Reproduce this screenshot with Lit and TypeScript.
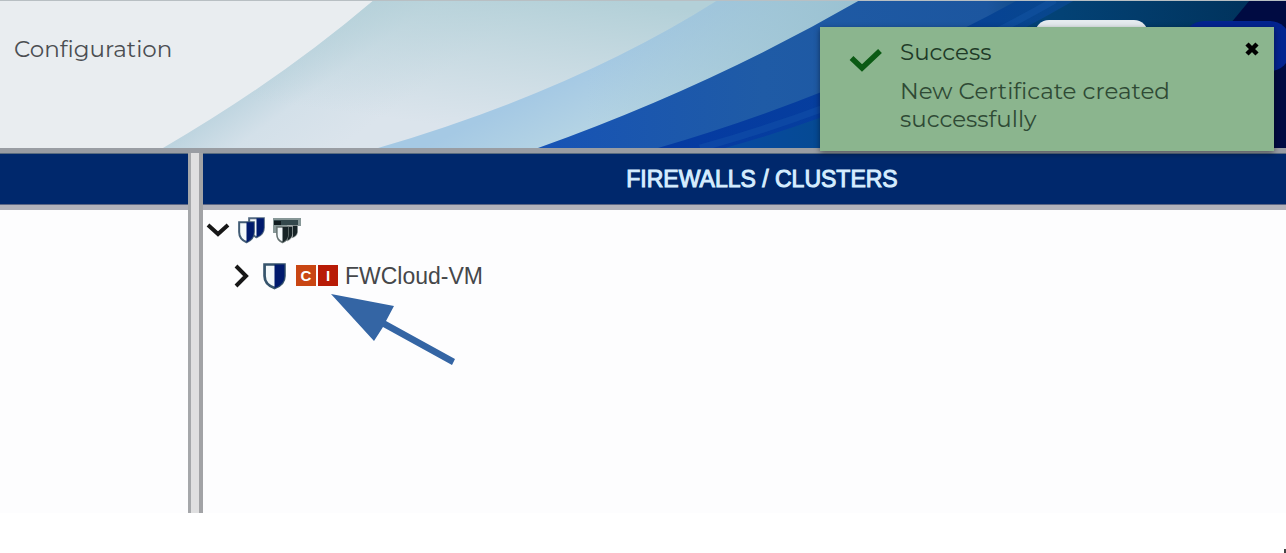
import { LitElement, html, css, svg } from "lit";
import { customElement, state } from "lit/decorators.js";

const shieldShape = (x: number, y: number, w: number, h: number, ink: string, rim: string) => svg`
  <g transform="translate(${x} ${y}) scale(${w / 22} ${h / 26})">
    <path d="M1.5 1.5H20.5V13C20.5 19 16.5 23 11 25C5.5 23 1.5 19 1.5 13Z" fill="#f4f9fb" stroke=${rim} stroke-width="2.6"/>
    <path d="M11 1.5H20.5V13C20.5 19 16.5 23 11 25Z" fill=${ink}/>
  </g>`;

@customElement("app-banner")
export class AppBanner extends LitElement {
  static styles = css`
    :host { display: block; position: relative; height: 148px; overflow: hidden; border-bottom: 5px solid #999da3; background: #e9edf0; }
    .art { position: absolute; inset: 0; width: 100%; height: 100%; }
    nav { position: relative; padding: 35px 14px; }
    a { color: #4b4e52; font: 23px/28px Montserrat, Inter, sans-serif; text-decoration: none; }
  `;
  render() {
    return html`
      <svg class="art" viewBox="0 0 1286 148" preserveAspectRatio="none" aria-hidden="true">
        <defs>
          <linearGradient id="pale" gradientUnits="userSpaceOnUse" x1="270" y1="72" x2="330" y2="155">
            <stop offset="0" stop-color="#bdd4df"/><stop offset=".4" stop-color="#d3e0e9"/><stop offset="1" stop-color="#dbe4ec"/>
          </linearGradient>
          <linearGradient id="paleTop" x1="0" y1="1" x2="1" y2="0">
            <stop offset=".2" stop-color="#b9d3da" stop-opacity="0"/><stop offset=".7" stop-color="#b3d0d8"/>
          </linearGradient>
          <linearGradient id="sky" gradientUnits="userSpaceOnUse" x1="560" y1="82" x2="590" y2="145">
            <stop offset="0" stop-color="#a5c9e4"/><stop offset="1" stop-color="#b8d6e4"/>
          </linearGradient>
          <linearGradient id="skyTop" x1="0" y1="0" x2="1" y2="0">
            <stop offset=".4" stop-color="#9bc2d2" stop-opacity="0"/><stop offset=".9" stop-color="#9bc2d2"/>
          </linearGradient>
          <linearGradient id="royal" x1="0" y1="0" x2="1" y2="0">
            <stop offset="0" stop-color="#1753b5"/><stop offset=".3" stop-color="#1f5ba6"/><stop offset=".6" stop-color="#1c569f"/>
            <stop offset=".7" stop-color="#06406f"/><stop offset="1" stop-color="#012a66"/>
          </linearGradient>
          <linearGradient id="stripe" x1="0" y1="0" x2="1" y2="0">
            <stop offset="0" stop-color="#053aa2"/><stop offset=".4" stop-color="#06409c"/><stop offset=".65" stop-color="#08478c"/><stop offset="1" stop-color="#003a6e"/>
          </linearGradient>
          <linearGradient id="deep" x1="0" y1="0" x2="1" y2="0">
            <stop offset="0" stop-color="#074aa2"/><stop offset=".3" stop-color="#044a88"/><stop offset=".6" stop-color="#034275"/><stop offset="1" stop-color="#003058"/>
          </linearGradient>
        </defs>
        <path d="M163 148Q280 80 374 0H1286V148Z" fill="url(#pale)"/>
        <path d="M163 148Q280 80 374 0H1286V148Z" fill="url(#paleTop)"/>
        <path d="M378 148Q576 90 718 0H1286V148Z" fill="url(#sky)"/>
        <path d="M378 148Q576 90 718 0H900V148Z" fill="url(#skyTop)"/>
        <path d="M538 148Q711 86 860 0H1286V148Z" fill="url(#royal)"/>
        <path d="M658 148Q850 92 1018 0H1286V148Z" fill="url(#stripe)"/>
        <path d="M700 148Q882 98 1055 0" fill="none" stroke="#1a5bae" stroke-width="7" opacity=".35"/>
        <path d="M725 148Q905 98 1075 0H1286V148Z" fill="url(#deep)"/>
        <path d="M1130 148Q1200 60 1250 0H1286V148Z" fill="#000b42"/>
        <rect x="1035" y="20" width="113" height="42" rx="14" fill="#e5ebef"/>
        <rect x="1184" y="21" width="106" height="50" rx="20" fill="#032490"/>
        <path d="M0 0H1286V1H0Z" fill="#b8bfc3"/>
      </svg>
      <nav><a href="#configuration">Configuration</a></nav>
    `;
  }
}

@customElement("app-toast")
export class AppToast extends LitElement {
  static styles = css`
    :host { display: flex; box-sizing: border-box; width: 454px; min-height: 124px; padding: 11px 14px 14px 28px; gap: 16px; background: #8bb58e; color: #2f4a35; box-shadow: 0 2px 6px #0007; font: 23px/28px Montserrat, Inter, sans-serif; }
    .tick { width: 36px; height: 32px; flex: none; margin-top: 6px; }
    .copy { flex: 1; }
    .title, .detail { margin: 0; }
    .title { color: #203a27; }
    .detail { margin-top: 11px; max-width: 290px; }
    button { flex: none; align-self: flex-start; margin-top: 2px; padding: 0; border: 0; background: none; width: 16px; height: 18px; cursor: pointer; }
    button svg { display: block; width: 16px; height: 18px; }
  `;
  render() {
    return html`
      <svg class="tick" viewBox="0 0 36 32" aria-hidden="true"><path d="M3.500 14L14 24L32 7" fill="none" stroke="#0b5a14" stroke-width="5.500"/></svg>
      <div class="copy">
        <p class="title">Success</p>
        <p class="detail">New Certificate created successfully</p>
      </div>
      <button type="button" aria-label="Close" @click=${() => this.dispatchEvent(new Event("dismiss"))}>
        <svg viewBox="0 0 16 18"><path d="M3 4L13 14M13 4L3 14" stroke="#000" stroke-width="4.500"/></svg>
      </button>
    `;
  }
}

@customElement("firewall-tree")
export class FirewallTree extends LitElement {
  static styles = css`
    :host { display: block; padding: 0 1px; color: #45474a; font: 23px/28px "Liberation Sans", Arial, sans-serif; }
    ul { list-style: none; margin: 0; padding: 0; }
    .row { display: flex; align-items: center; height: 51px; }
    .root { height: 40px; }
    .child { padding-left: 22px; }
    button { padding: 0; border: 0; background: none; width: 28px; height: 28px; cursor: pointer; }
    svg { display: block; flex: none; }
    .pair { margin-left: 5px; }
    .stack { margin-left: 5px; }
    .shield { margin-left: 9px; }
    .badges { display: flex; gap: 2px; margin: 0 7px 0 10px; }
    .badge { width: 20px; height: 21px; background: #c94613; color: #fff; font: bold 15px/21px "Liberation Sans", Arial, sans-serif; text-align: center; }
    .install { background: #b81b06; }
  `;
  render() {
    return html`
      <ul>
        <li>
          <div class="row root">
            <button type="button" aria-label="Collapse"><svg width="28" height="28" viewBox="0 0 28 28"><path d="M4 9L14 18L24 9" fill="none" stroke="#171717" stroke-width="4"/></svg></button>
            <svg class="pair" width="30" height="28" viewBox="0 0 30 28">
              ${shieldShape(11, 1, 17, 21, "#001a6d", "#536981")}
              ${shieldShape(1, 5, 17, 22, "#001a6d", "#425c75")}
            </svg>
            <svg class="stack" width="30" height="28" viewBox="0 0 30 28">
              <path d="M1 2H29V10H26V17H1Z" fill="#879797"/>
              <path d="M2 4H26V9H2Z" fill="#34484c"/><path d="M2 5H9V9H2Z" fill="#111c20"/>
              ${shieldShape(15, 9, 11, 13, "#172326", "#a4abab")}
              ${shieldShape(10, 10, 11, 15, "#172326", "#a4abab")}
              ${shieldShape(4, 10, 13, 17, "#172326", "#667271")}
            </svg>
          </div>
          <ul>
            <li class="row child">
              <button type="button" aria-label="Expand"><svg width="28" height="28" viewBox="0 0 28 28"><path d="M10 4L20 14L10 24" fill="none" stroke="#171717" stroke-width="4"/></svg></button>
              <svg class="shield" width="23" height="28" viewBox="0 0 23 28">${shieldShape(0, 1, 23, 26, "#001a6d", "#36546c")}</svg>
              <span class="badges"><span class="badge">C</span><span class="badge install">I</span></span>
              <span>FWCloud-VM</span>
            </li>
          </ul>
        </li>
      </ul>
    `;
  }
}

@customElement("app-root")
export class AppRoot extends LitElement {
  static styles = css`
    :host { display: flex; flex-direction: column; position: relative; min-height: 100vh; box-sizing: border-box; padding-bottom: 40px; overflow: hidden; background: #fff; }
    app-banner { flex: none; }
    .workspace { flex: 1; display: grid; grid-template-columns: 188px 15px minmax(0, 1fr); }
    .panel { background: #fdfdfe; }
    .head { box-sizing: border-box; height: 57px; margin: 0; padding: 3px 0 0 35px; border-top: 1px solid #596c80; border-bottom: 5px solid #b2b2ba; background: #00286c; box-shadow: inset 0 -1px #5b6685; color: #d5edff; font: 23px/45px "Liberation Sans", Arial, sans-serif; -webkit-text-stroke: 1px #d5edff; text-align: center; }
    .splitter { box-sizing: border-box; border-left: 3px solid #a5a7aa; border-right: 4px solid #a2a3a6; background: #dfdfe0; }
    app-toast { position: absolute; top: 27px; right: 12px; }
    .arrow { position: absolute; left: 330px; top: 293px; width: 126px; height: 74px; pointer-events: none; }
    .pointer { position: absolute; right: 0; bottom: 0; width: 2px; height: 4px; background: #444; }
  `;
  @state() private toastOpen = true;
  render() {
    return html`
      <app-banner></app-banner>
      <main class="workspace">
        <section class="panel"><div class="head"></div></section>
        <div class="splitter" role="separator" aria-orientation="vertical"></div>
        <section class="panel">
          <h2 class="head">FIREWALLS / CLUSTERS</h2>
          <firewall-tree></firewall-tree>
        </section>
      </main>
      ${this.toastOpen ? html`<app-toast role="status" @dismiss=${() => (this.toastOpen = false)}></app-toast>` : null}
      <svg class="arrow" viewBox="0 0 126 74" aria-hidden="true"><path d="M1 1L64 13L56 28L125 66L122 72L53 34L44 48Z" fill="#3465a4"/></svg>
      <div class="pointer"></div>
    `;
  }
}
